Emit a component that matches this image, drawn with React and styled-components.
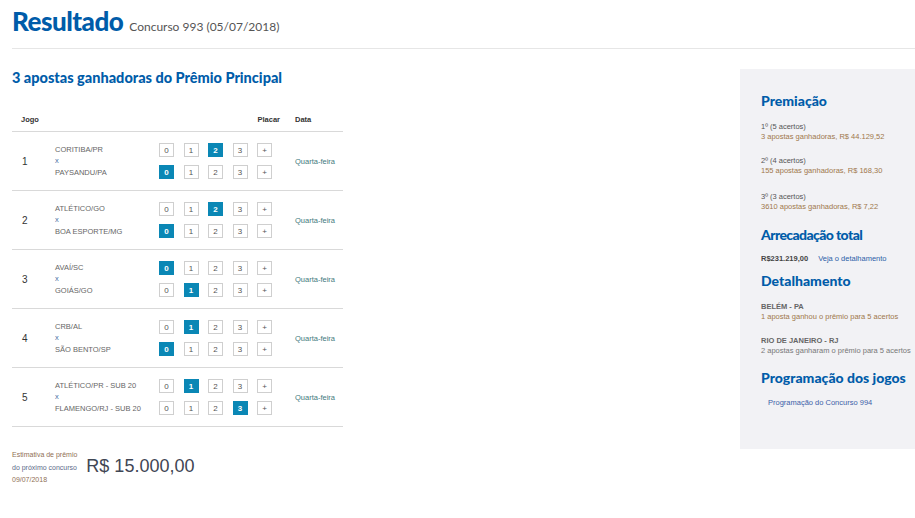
import React from "react";
import styled, { createGlobalStyle } from "styled-components";

const GlobalStyle = createGlobalStyle`
  html, body {
    margin: 0;
    padding: 0;
    background: #fff;
    font-family: "Liberation Sans", Arial, sans-serif;
    color: #555;
  }
`;

const Page = styled.div`
  width: 915px;
  padding-left: 12px;
  box-sizing: border-box;
`;

const Header = styled.header`
  display: flex;
  align-items: baseline;
  gap: 6px;
  height: 49px;
  box-sizing: border-box;
  padding-top: 5px;
  border-bottom: 1px solid #e6e6e6;
`;

const Title = styled.h1`
  margin: 0;
  font-family: Lato, "Noto Sans", sans-serif;
  font-weight: 900;
  font-size: 26px;
  color: #005ca9;
  letter-spacing: -0.5px;
`;

const Subtitle = styled.span`
  font-family: Lato, "Noto Sans", sans-serif;
  font-size: 12px;
  color: #555;
`;

const Content = styled.div`
  display: grid;
  grid-template-columns: 1fr 175px;
  margin-top: 20px;
`;

const Main = styled.main`
  display: flex;
  flex-direction: column;
`;

const SectionTitle = styled.h2`
  margin: 0;
  margin-top: ${(p) => p.mt || 0}px;
  font-family: Lato, "Noto Sans", sans-serif;
  font-weight: 900;
  font-size: ${(p) => p.size || 14.5}px;
  line-height: 18px;
  color: #005ca9;
  letter-spacing: ${(p) => p.ls || 0}px;
`;

const Table = styled.div`
  width: 331px;
  margin-top: 20px;
`;

const Row = styled.div`
  display: grid;
  grid-template-columns: 43px 104px 136px 1fr;
  align-items: center;
  height: ${(p) => (p.head ? 24 : 58)}px;
  border-bottom: 1px solid #d9d9d9;
`;

const HeadCell = styled.div`
  font-size: 7.5px;
  font-weight: bold;
  color: #333;
  padding-left: ${(p) => p.pad || 0}px;
  padding-right: ${(p) => p.padRight || 0}px;
  text-align: ${(p) => p.align || "left"};
`;

const Num = styled.div`
  padding-left: 10px;
  font-size: 10px;
  color: #333;
`;

const Teams = styled.div`
  display: flex;
  flex-direction: column;
  font-size: 7.5px;
  line-height: 11.5px;
  color: #666;
`;

const Versus = styled.span`
  color: #4a6fa5;
`;

const Scores = styled.div`
  display: flex;
  flex-direction: column;
  gap: 8px;
`;

const ScoreLine = styled.div`
  display: flex;
  gap: 9.5px;
`;

const Box = styled.span`
  width: 15px;
  height: 14px;
  box-sizing: border-box;
  display: flex;
  align-items: center;
  justify-content: center;
  font-size: 8px;
  font-weight: ${(p) => (p.on ? "bold" : "normal")};
  color: ${(p) => (p.on ? "#fff" : "#555")};
  background: ${(p) => (p.on ? "#0a87b5" : "#fff")};
  border: 1px solid ${(p) => (p.on ? "#0a87b5" : "#cfcfcf")};
`;

const DateCell = styled.div`
  font-size: 7.5px;
  color: #3f7a7e;
`;

const Estimate = styled.div`
  display: flex;
  align-items: center;
  gap: 9px;
  margin-top: 22px;
`;

const EstimateLabel = styled.div`
  display: flex;
  flex-direction: column;
  font-size: 7px;
  line-height: 12.5px;
`;

const Tone = styled.span`
  color: ${(p) => p.c};
`;

const Amount = styled.div`
  font-size: 18px;
  color: #3f4654;
  padding-bottom: 3px;
`;

const Sidebar = styled.aside`
  background: #f2f2f5;
  height: 380px;
  padding: 23px 0 0 21px;
  box-sizing: border-box;
  display: flex;
  flex-direction: column;
`;

const Prize = styled.div`
  display: flex;
  flex-direction: column;
  font-size: 7.5px;
  line-height: 10px;
  margin-top: ${(p) => p.mt}px;
`;

const Label = styled.span`
  color: ${(p) => p.c || "#555"};
  font-weight: ${(p) => (p.bold ? "bold" : "normal")};
`;

const TotalLine = styled.div`
  display: flex;
  align-items: baseline;
  gap: 10px;
  font-size: 7.5px;
  line-height: 10px;
  margin-top: 10px;
`;

const Total = styled.span`
  font-weight: bold;
  color: #444;
`;

const Link = styled.a`
  color: #2b5ea8;
  text-decoration: none;
`;

const ScheduleLink = styled(Link)`
  font-size: 7.5px;
  padding-left: 7px;
  margin-top: 11px;
  color: #3d5fa8;
`;

const games = [
  { home: "CORITIBA/PR", away: "PAYSANDU/PA", h: 2, a: 0 },
  { home: "ATLÉTICO/GO", away: "BOA ESPORTE/MG", h: 2, a: 0 },
  { home: "AVAÍ/SC", away: "GOIÁS/GO", h: 0, a: 1 },
  { home: "CRB/AL", away: "SÃO BENTO/SP", h: 1, a: 0 },
  { home: "ATLÉTICO/PR - SUB 20", away: "FLAMENGO/RJ - SUB 20", h: 1, a: 3 },
];

const Line = ({ value }) => (
  <ScoreLine>
    {["0", "1", "2", "3", "+"].map((v, i) => (
      <Box key={v} on={i === value}>
        {v}
      </Box>
    ))}
  </ScoreLine>
);

const prizes = [
  { t: "1º (5 acertos)", d: "3 apostas ganhadoras, R$ 44.129,52", mt: 12 },
  { t: "2º (4 acertos)", d: "155 apostas ganhadoras, R$ 168,30", mt: 14 },
  { t: "3º (3 acertos)", d: "3610 apostas ganhadoras, R$ 7,22", mt: 16 },
];

export default function App() {
  return (
    <Page>
      <GlobalStyle />
      <Header>
        <Title>Resultado</Title>
        <Subtitle>Concurso 993 (05/07/2018)</Subtitle>
      </Header>
      <Content>
        <Main>
          <SectionTitle>3 apostas ganhadoras do Prêmio Principal</SectionTitle>
          <Table>
            <Row head>
              <HeadCell pad={9}>Jogo</HeadCell>
              <div />
              <HeadCell align="right" padRight={15}>
                Placar
              </HeadCell>
              <HeadCell>Data</HeadCell>
            </Row>
            {games.map((g, i) => (
              <Row key={i}>
                <Num>{i + 1}</Num>
                <Teams>
                  <span>{g.home}</span>
                  <Versus>x</Versus>
                  <span>{g.away}</span>
                </Teams>
                <Scores>
                  <Line value={g.h} />
                  <Line value={g.a} />
                </Scores>
                <DateCell>Quarta-feira</DateCell>
              </Row>
            ))}
          </Table>
          <Estimate>
            <EstimateLabel>
              <Tone c="#8f6f55">Estimativa de prêmio</Tone>
              <Tone c="#5d6a8a">do próximo concurso</Tone>
              <Tone c="#8f6f55">09/07/2018</Tone>
            </EstimateLabel>
            <Amount>R$ 15.000,00</Amount>
          </Estimate>
        </Main>
        <Sidebar>
          <SectionTitle size={14}>Premiação</SectionTitle>
          {prizes.map((p) => (
            <Prize key={p.t} mt={p.mt}>
              <Label>{p.t}</Label>
              <Label c="#a0784c">{p.d}</Label>
            </Prize>
          ))}
          <SectionTitle size={14} ls={-0.6} mt={14}>
            Arrecadação total
          </SectionTitle>
          <TotalLine>
            <Total>R$231.219,00</Total>
            <Link href="#">Veja o detalhamento</Link>
          </TotalLine>
          <SectionTitle size={14} mt={8}>
            Detalhamento
          </SectionTitle>
          <Prize mt={12}>
            <Label c="#666" bold>
              BELÉM - PA
            </Label>
            <Label c="#a0784c">1 aposta ganhou o prêmio para 5 acertos</Label>
          </Prize>
          <Prize mt={14}>
            <Label c="#666" bold>
              RIO DE JANEIRO - RJ
            </Label>
            <Label c="#777">2 apostas ganharam o prêmio para 5 acertos</Label>
          </Prize>
          <SectionTitle size={14} mt={13}>
            Programação dos jogos
          </SectionTitle>
          <ScheduleLink href="#">Programação do Concurso 994</ScheduleLink>
        </Sidebar>
      </Content>
    </Page>
  );
}
